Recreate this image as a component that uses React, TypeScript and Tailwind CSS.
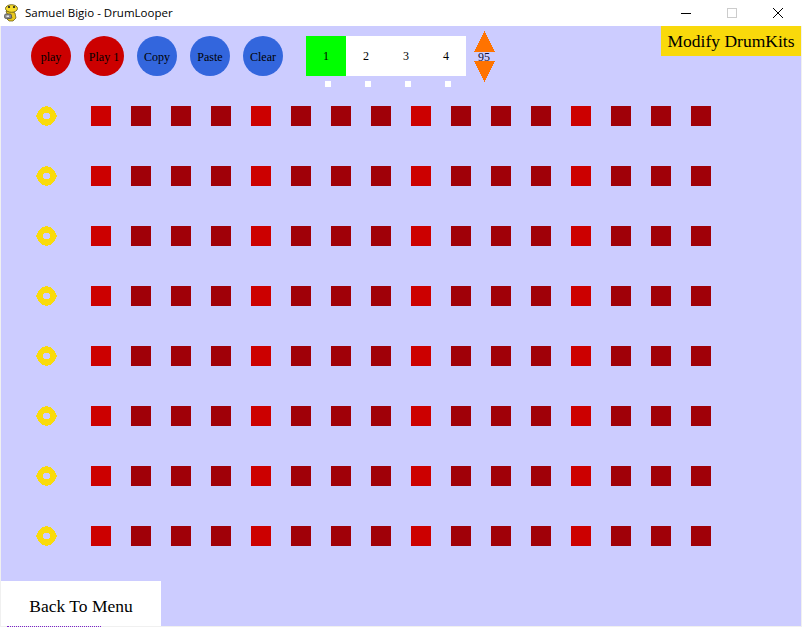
import React from 'react';

const COLUMNS = Array.from({ length: 16 }, (_, i) => i);
const ROWS = Array.from({ length: 8 }, (_, i) => i);
const SERIF = 'font-["Liberation_Serif",serif]';

const RoundButton: React.FC<{ label: string; red?: boolean }> = ({ label, red }) => (
  <div
    className={`w-10 h-10 pt-px rounded-full flex items-center justify-center text-[12px] text-black ${SERIF} ${
      red ? 'bg-[#cc0000]' : 'bg-[#3366dd]'
    }`}
  >
    {label}
  </div>
);

const Gear: React.FC = () => (
  <svg width="21" height="20" viewBox="0 0 21 20" shapeRendering="crispEdges">
    <circle cx="10.5" cy="10" r="6.5" fill="none" stroke="#fadb0a" strokeWidth="6" />
    <rect x="9" y="0" width="3" height="1" fill="#fadb0a" />
    <rect x="9" y="19" width="3" height="1" fill="#fadb0a" />
    <rect x="0" y="9" width="1" height="2" fill="#fadb0a" />
    <rect x="20" y="9" width="1" height="2" fill="#fadb0a" />
  </svg>
);

const SnakeIcon: React.FC = () => (
  <svg width="16" height="18" viewBox="0 0 16 18">
    <path d="M2 7 L8 7 L11 9 L12 14 L9 17 L5 17 L3 15 L8 14 L7 11 L3 10z" fill="#e8c81e" stroke="#5d5212" strokeWidth="0.7" />
    <ellipse cx="7.5" cy="4.5" rx="6" ry="3.8" fill="#f6dc2a" stroke="#5d5212" strokeWidth="0.8" />
    <circle cx="5" cy="3" r="1.1" fill="#1c1c1c" />
    <circle cx="10" cy="3" r="1.1" fill="#1c1c1c" />
    <rect x="0.5" y="10" width="7" height="4.5" rx="1.5" fill="#8c8c8c" stroke="#4a4a4a" strokeWidth="0.7" />
    <rect x="2.5" y="11.5" width="2.5" height="1.5" fill="#e6e6e6" />
  </svg>
);

const Spinner: React.FC = () => (
  <div className="w-[21px] flex flex-col items-center -mt-[5px]">
    <svg width="21" height="21" viewBox="0 0 21 21" shapeRendering="crispEdges">
      <polygon points="10.5,0 21,21 0,21" fill="#ff7300" />
    </svg>
    <div className={`h-[9px] pr-px flex items-center justify-center text-[12px] text-[#111133] ${SERIF}`}>95</div>
    <svg width="21" height="21" viewBox="0 0 21 21" shapeRendering="crispEdges">
      <polygon points="0,0 21,0 10.5,21" fill="#ff7300" />
    </svg>
  </div>
);

const App: React.FC = () => {
  return (
    <div className="w-[802px] h-[627px] bg-[#f0f0f0] flex flex-col overflow-hidden">
      <div className="h-[26px] bg-white flex items-center shrink-0">
        <div className="ml-[4px] w-[16px] flex justify-center">
          <SnakeIcon />
        </div>
        <span className='ml-[5px] text-[11.5px] text-black font-["Open_Sans",sans-serif]'>Samuel Bigio - DrumLooper</span>
        <div className="ml-auto flex items-center">
          <div className="w-[46px] flex justify-center">
            <svg width="10" height="10" viewBox="0 0 10 10" shapeRendering="crispEdges">
              <rect x="0" y="5" width="10" height="1" fill="#000000" />
            </svg>
          </div>
          <div className="w-[46px] flex justify-center">
            <svg width="10" height="10" viewBox="0 0 10 10" shapeRendering="crispEdges">
              <rect x="0.5" y="0.5" width="9" height="9" fill="none" stroke="#cccccc" />
            </svg>
          </div>
          <div className="w-[46px] mr-[1px] flex justify-center">
            <svg width="10" height="10" viewBox="0 0 10 10">
              <path d="M0 0 L10 10 M10 0 L0 10" stroke="#000000" strokeWidth="1" />
            </svg>
          </div>
        </div>
      </div>

      <div className="ml-px mr-px flex-1 bg-[#ccccff] flex flex-col min-h-0">
        <div className="h-20 flex items-start shrink-0">
          <div className="flex items-start pl-[30px] pt-[10px]">
            <div className="flex gap-[13px]">
              <RoundButton label="play" red />
              <RoundButton label="Play 1" red />
              <RoundButton label="Copy" />
              <RoundButton label="Paste" />
              <RoundButton label="Clear" />
            </div>
            <div className="ml-[23px] flex flex-col">
              <div className={`w-40 h-10 bg-white flex text-[12px] text-black ${SERIF}`}>
                {['1', '2', '3', '4'].map((step, i) => (
                  <div key={step} className={`w-10 flex items-center justify-center ${i === 0 ? 'bg-[#00ff00]' : ''}`}>
                    {step}
                  </div>
                ))}
              </div>
              <div className="flex mt-[5px]">
                {[0, 1, 2, 3].map((i) => (
                  <div key={i} className="w-10 pl-[19px]">
                    <div className="w-[6px] h-[6px] bg-white" />
                  </div>
                ))}
              </div>
            </div>
            <div className="ml-2">
              <Spinner />
            </div>
          </div>
          <div className={`ml-auto w-[140px] h-[30px] bg-[#f9d90b] flex items-center justify-center text-[17.5px] text-black ${SERIF}`}>
            Modify DrumKits
          </div>
        </div>

        <div className="flex flex-col gap-10 pl-[35px]">
          {ROWS.map((row) => (
            <div key={row} className="h-5 flex items-center">
              <Gear />
              <div className="ml-[34px] flex gap-5">
                {COLUMNS.map((col) => (
                  <div key={col} className={`w-5 h-5 ${col % 4 === 0 ? 'bg-[#cc0000]' : 'bg-[#a00008]'}`} />
                ))}
              </div>
            </div>
          ))}
        </div>

        <div className={`mt-auto w-40 h-[45px] pt-[5px] bg-white flex items-center justify-center text-[17.5px] text-black ${SERIF}`}>
          Back To Menu
        </div>
      </div>
      <div className="h-px shrink-0 pl-[7px]">
        <div className="w-[94px] border-t border-dotted border-[#7a22c8]" />
      </div>
    </div>
  );
};

export default App;
